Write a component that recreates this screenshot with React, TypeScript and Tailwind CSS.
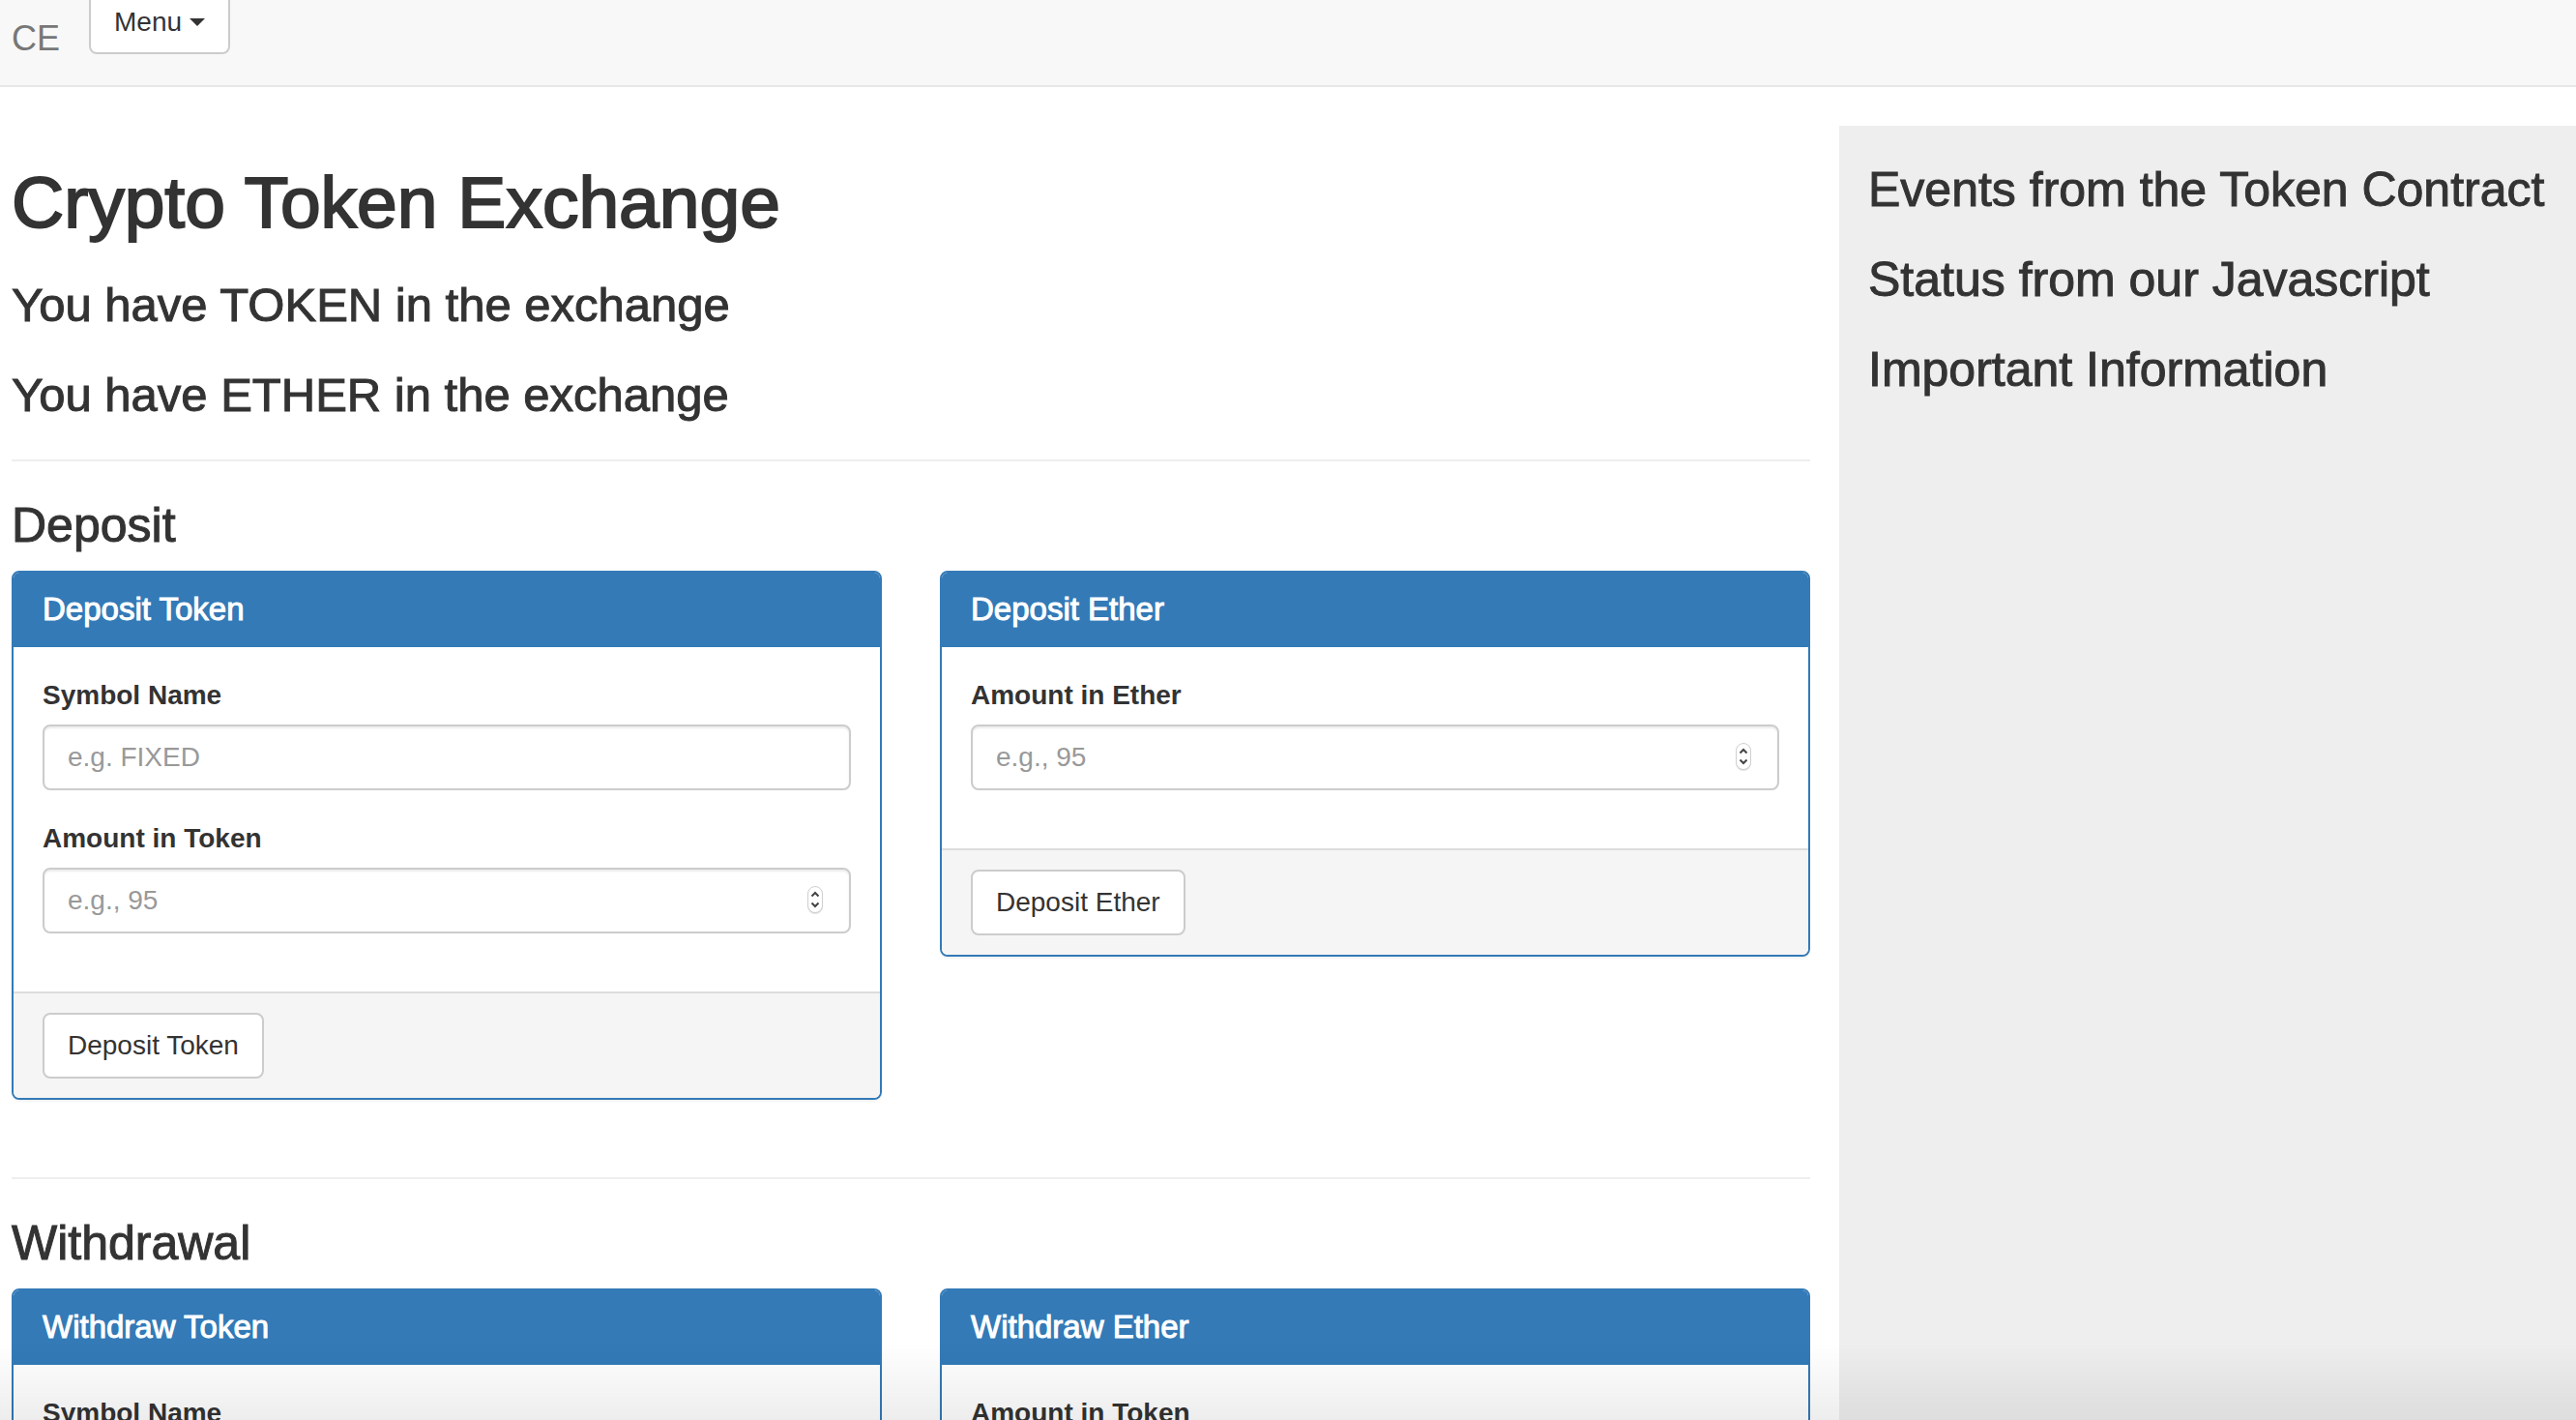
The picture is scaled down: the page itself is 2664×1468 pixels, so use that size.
import React from "react";

type Field = { id: string; label: string; placeholder: string; type: "text" | "number" };

function Spinner() {
  return (
    <svg
      className="pointer-events-none absolute right-7 top-[17px]"
      width="18"
      height="32"
      viewBox="0 0 18 32"
      fill="none"
      aria-hidden="true"
    >
      <rect x="1" y="3" width="16" height="28" rx="8" fill="#000" fillOpacity="0.12" />
      <rect x="1.5" y="2.5" width="15" height="27" rx="7.5" fill="#fff" stroke="#d0d0d0" />
      <path d="M5.5 12.5 9 9l3.5 3.5M5.5 19.5 9 23l3.5-3.5" stroke="#444" strokeWidth="2" />
    </svg>
  );
}

function FormGroup({ id, label, placeholder, type }: Field) {
  return (
    <div className="mb-[30px]">
      <label htmlFor={id} className="mb-[10px] block text-[28px] font-bold leading-10">
        {label}
      </label>
      <div className="relative">
        <input
          id={id}
          type={type}
          placeholder={placeholder}
          className="block h-[68px] w-full appearance-none rounded-lg border-2 border-[#ccc] bg-transparent px-6 text-[28px] text-[#555] shadow-[inset_0_2px_2px_rgba(0,0,0,0.075)] outline-none [-moz-appearance:textfield] placeholder:text-[#999] focus:border-[#66afe9] [&::-webkit-inner-spin-button]:appearance-none"
        />
        {type === "number" && <Spinner />}
      </div>
    </div>
  );
}

function Panel({ title, fields }: { title: string; fields: Field[] }) {
  return (
    <form
      className="mb-10 rounded-lg border-2 border-[#337ab7] bg-white shadow-[0_2px_2px_rgba(0,0,0,0.05)]"
      onSubmit={(e) => e.preventDefault()}
    >
      <div className="rounded-t-md border-b-2 border-[#337ab7] bg-[#337ab7] px-[30px] py-5">
        <h3 className="text-[33px] leading-[35px] text-white [-webkit-text-stroke:1px]">{title}</h3>
      </div>
      <div className="p-[30px]">
        {fields.map((field) => (
          <FormGroup key={field.id} {...field} />
        ))}
      </div>
      <div className="rounded-b-md border-t-2 border-[#ddd] bg-[#f5f5f5] px-[30px] py-5">
        <button
          type="submit"
          className="block h-[68px] rounded-lg border-2 border-[#ccc] bg-white px-6 text-[28px] leading-10 hover:bg-[#e6e6e6]"
        >
          {title}
        </button>
      </div>
    </form>
  );
}

function Heading({ children }: { children: React.ReactNode }) {
  return <h2 className="text-[50px] leading-[53px] [-webkit-text-stroke:1px]">{children}</h2>;
}

function Balance({ children }: { children: React.ReactNode }) {
  return <h2 className="text-[49px] leading-[53px] [-webkit-text-stroke:1px]">{children}</h2>;
}

function Section({ title, children }: { title: string; children: React.ReactNode }) {
  return (
    <section className="mt-10 border-t-2 border-[#eee] pt-10">
      <Heading>{title}</Heading>
      <div className="mt-5 grid grid-cols-2 items-start gap-[60px]">{children}</div>
    </section>
  );
}

const symbol = (id: string): Field => ({ id, label: "Symbol Name", placeholder: "e.g. FIXED", type: "text" });
const amount = (id: string, label: string): Field => ({ id, label, placeholder: "e.g., 95", type: "number" });

export default function App() {
  return (
    <div className="flex h-screen flex-col overflow-hidden bg-white font-['Helvetica_Neue','Liberation_Sans',Arial,sans-serif] text-[#333]">
      <nav className="flex h-[90px] shrink-0 items-start border-b-2 border-[#e7e7e7] bg-[#f8f8f8] pl-3">
        <a href="#" className="w-20 pt-5 text-4xl leading-10 text-[#777]">
          CE
        </a>
        <button
          type="button"
          className="flex h-14 items-center gap-2 rounded-b-lg border-2 border-t-0 border-[#ccc] bg-white px-6 pb-2 text-[28px] leading-10"
        >
          Menu
          <svg width="16" height="8" viewBox="0 0 16 8" aria-hidden="true">
            <path d="M0 0h16L8 8z" fill="#333" />
          </svg>
        </button>
      </nav>

      <div className="mt-10 grid min-h-0 flex-1 grid-cols-[951fr_381fr]">
        <main className="pl-3 pr-[30px] pt-10">
          <h1 className="text-[75px] leading-[79px] [-webkit-text-stroke:2px]">Crypto Token Exchange</h1>
          <div className="mt-10 flex flex-col gap-10">
            <Balance>You have TOKEN in the exchange</Balance>
            <Balance>You have ETHER in the exchange</Balance>
          </div>

          <Section title="Deposit">
            <Panel
              title="Deposit Token"
              fields={[symbol("deposit-symbol"), amount("deposit-token-amount", "Amount in Token")]}
            />
            <Panel title="Deposit Ether" fields={[amount("deposit-ether-amount", "Amount in Ether")]} />
          </Section>

          <Section title="Withdrawal">
            <Panel
              title="Withdraw Token"
              fields={[symbol("withdraw-symbol"), amount("withdraw-token-amount", "Amount in Token")]}
            />
            <Panel title="Withdraw Ether" fields={[amount("withdraw-ether-amount", "Amount in Token")]} />
          </Section>
        </main>

        <aside className="flex flex-col gap-10 bg-[#eee] pl-[30px] pt-10">
          <Heading>Events from the Token Contract</Heading>
          <Heading>Status from our Javascript</Heading>
          <Heading>Important Information</Heading>
        </aside>
      </div>

      <div className="pointer-events-none fixed inset-x-0 bottom-0 h-20 bg-linear-to-b from-transparent to-black/7" />
    </div>
  );
}
